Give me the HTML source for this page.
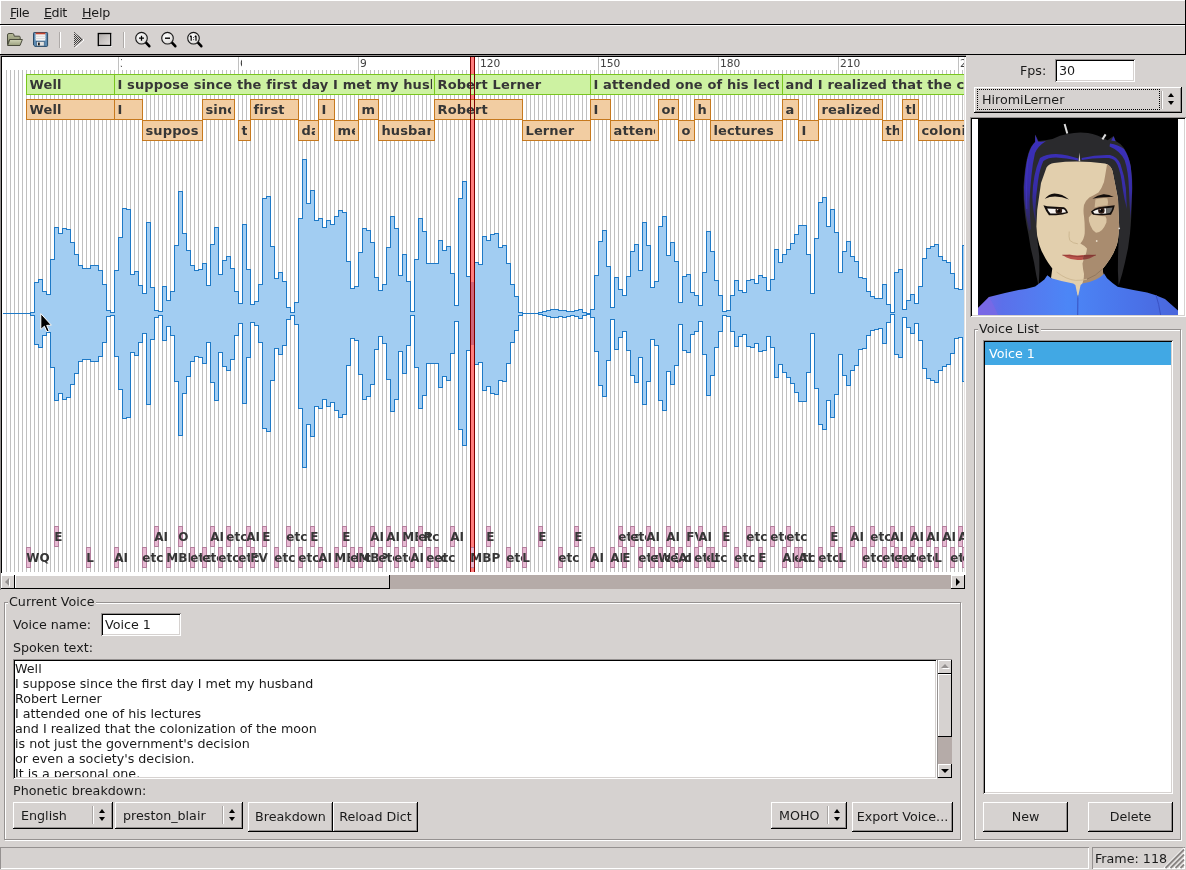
<!DOCTYPE html>
<html lang="en">
<head>
<meta charset="utf-8">
<title>Papagayo</title>
<style>
html,body{margin:0;padding:0}
body{width:1186px;height:870px;position:relative;overflow:hidden;background:#d6d2d0;
 font-family:"DejaVu Sans","Liberation Sans",sans-serif;font-size:12.7px;color:#1a1a1a;line-height:14px}
.a{position:absolute}
.t{position:absolute;white-space:nowrap;line-height:14px;height:14px;margin-top:1px}
.raised{position:absolute;box-sizing:border-box;box-shadow:inset -1px -1px 0 #000,inset 1px 1px 0 #fff}
.btn{position:absolute;box-sizing:border-box;background:#d6d2d0;
 box-shadow:inset -1px -1px 0 #000,inset 1px 1px 0 #fff,inset -2px -2px 0 #959190;text-align:center;white-space:nowrap}
.btn span{position:absolute;left:0;right:0;text-align:center;line-height:14px}
.sunk{position:absolute;box-sizing:border-box;background:#fff;
 box-shadow:inset 1px 1px 0 #959190,inset -1px -1px 0 #fff,inset 2px 2px 0 #000,inset -2px -2px 0 #d6d2d0}
.frame{position:absolute;box-sizing:border-box;border:1px solid #959190;box-shadow:inset 1px 1px 0 #fff,1px 1px 0 #fff}
.flabel{margin-top:1px;position:absolute;background:#d6d2d0;white-space:nowrap;line-height:14px;height:14px;padding:0 2px 0 1px}
u{text-decoration:underline;text-underline-offset:1px}
.cvwrap{position:absolute;left:2px;top:57px;width:962px;height:515px;overflow:hidden;background:#fff}
.cv{position:absolute;left:0;top:0}
.bx{position:absolute;height:19px;overflow:hidden;white-space:nowrap;font-weight:bold;color:#363636;line-height:19px;
 box-sizing:border-box;padding-left:2.5px;font-size:13px;letter-spacing:.12px}
.pt{position:absolute;height:19px;white-space:nowrap;font-weight:bold;color:#363636;line-height:19px;font-size:12px}
.pb{position:absolute;width:5px;height:21px;box-sizing:border-box;border:1px solid #b4809e;background:#e7b9d2}
.rl{position:absolute;top:1px;height:12px;line-height:12px;font-size:10.67px;color:#404040;overflow:hidden;white-space:nowrap}
.arr{position:absolute;width:0;height:0;border-left:3.5px solid transparent;border-right:3.5px solid transparent}
.combo-sep{position:absolute;width:1px;background:#aaa6a4;box-shadow:1px 0 0 #fff}
</style>
</head>
<body>
<div id="root" style="position:absolute;left:0;top:0;width:1186px;height:870px;will-change:transform">
<!-- menubar -->
<div class="raised" style="left:0;top:0;width:1186px;height:25px"></div>
<div class="t" style="left:10px;top:5px;letter-spacing:-.55px"><u>F</u>ile</div>
<div class="t" style="left:44px;top:5px;letter-spacing:-.45px"><u>E</u>dit</div>
<div class="t" style="left:82px;top:5px;letter-spacing:-.2px"><u>H</u>elp</div>
<!-- toolbar -->
<div class="raised" style="left:0;top:25px;width:1186px;height:30px"></div>
<svg class="a" style="left:0;top:25px" width="220" height="30" viewBox="0 25 220 30">
<defs>
<linearGradient id="fg1" x1="0" y1="0" x2="0" y2="1"><stop offset="0" stop-color="#d2d5b8"/><stop offset="1" stop-color="#9a9f7e"/></linearGradient>
<linearGradient id="fg2" x1="0" y1="0" x2="0" y2="1"><stop offset="0" stop-color="#b4b896"/><stop offset="1" stop-color="#8a8e70"/></linearGradient>
<linearGradient id="sg" x1="0" y1="0" x2="1" y2="1"><stop offset="0" stop-color="#aeaaa8"/><stop offset="1" stop-color="#e4e0de"/></linearGradient>
<radialGradient id="lens" cx=".4" cy=".35" r=".7"><stop offset="0" stop-color="#fff"/><stop offset="1" stop-color="#d8d6d4"/></radialGradient>
<pattern id="stip" x="0" y="0" width="2" height="2" patternUnits="userSpaceOnUse"><rect x="0" y="0" width="1" height="1" fill="#000"/><rect x="1" y="1" width="1" height="1" fill="#000"/></pattern>
</defs>
<!-- folder -->
<path d="M7.5 44.5 L7.5 35 Q7.5 33.5 9 33.5 L12.5 33.5 Q13.8 33.5 14 35 L14.2 36.2 L19.2 36.2 Q20.2 36.2 20.2 37.3 L20.2 39.5 L9.5 39.5 Z" fill="url(#fg2)" stroke="#4a4b3c" stroke-width="1" stroke-linejoin="round"/>
<path d="M9.8 39.5 L22.4 39.5 L20 45.5 L7.6 45.5 Z" fill="url(#fg1)" stroke="#4a4b3c" stroke-width="1" stroke-linejoin="round"/>
<!-- floppy -->
<path d="M34.3 32.5 L46.8 32.5 Q47.6 32.5 47.6 33.3 L47.6 45.6 Q47.6 46.4 46.8 46.4 L35 46.4 L33.5 45 L33.5 33.3 Q33.5 32.5 34.3 32.5 Z" fill="#5b8ab2" stroke="#2b4a66" stroke-width="1"/>
<rect x="35.6" y="33" width="9.8" height="7.6" fill="#f4f4f4"/>
<rect x="35.6" y="32.6" width="9.8" height="1.7" fill="#c4452f"/>
<rect x="35.6" y="35.8" width="9.8" height="1" fill="#dcdcdc"/>
<rect x="35.6" y="38" width="9.8" height="1" fill="#dcdcdc"/>
<rect x="36.6" y="41.6" width="7.6" height="4.4" fill="#e2e2e0" stroke="#3a5a78" stroke-width=".6"/>
<rect x="38" y="42.6" width="1.8" height="2.8" fill="#222"/>
<!-- separators -->
<rect x="59" y="32" width="1" height="16" fill="#aeaaa8"/><rect x="60" y="32" width="1" height="16" fill="#fff"/>
<rect x="123" y="32" width="1" height="16" fill="#aeaaa8"/><rect x="124" y="32" width="1" height="16" fill="#fff"/>
<!-- play (insensitive, stippled) -->
<path d="M75.5 33 L84 40 L75.5 47.5" fill="none" stroke="#fff" stroke-width="1"/>
<path d="M74 32 L83 39.5 L74 47 Z" fill="url(#stip)" shape-rendering="crispEdges" opacity=".72"/>
<path d="M74.5 32.5 L83 39.5 L74.5 46.5" fill="none" stroke="#8a8684" stroke-width="1"/>
<!-- stop -->
<rect x="99" y="34" width="13" height="13" fill="#fff"/>
<rect x="98.3" y="33.5" width="12.4" height="12" fill="url(#sg)" stroke="#000" stroke-width="1.3"/>
<!-- zoom icons -->
<g stroke="#000" stroke-linecap="round" fill="none">
 <g id="mag"><line x1="146" y1="42.6" x2="149.3" y2="46.2" stroke-width="2.6"/><circle cx="141.5" cy="38.2" r="5.8" fill="url(#lens)" stroke="#1a1a1a" stroke-width="1.1"/></g>
 <use href="#mag" x="26"/><use href="#mag" x="52"/>
 <path d="M139 38.2 H144 M141.5 35.7 V40.7" stroke-width="1.3" stroke-linecap="butt"/>
 <path d="M165 38.2 H170" stroke-width="1.4" stroke-linecap="butt"/>
 <path d="M191.2 35.8 V40.8 M190 36.8 L191.2 35.8 M196 35.8 V40.8 M194.8 36.8 L196 35.8" stroke-width="1.2" stroke-linecap="butt"/>
 <path d="M193.6 37.2 V37.9 M193.6 39.4 V40.1" stroke-width="1" stroke-linecap="butt"/>
</g>
</svg>

<!-- canvas -->
<div class="a" style="left:0;top:55px;width:966px;height:1px;background:#959190"></div>
<div class="a" style="left:0;top:55px;width:1px;height:535px;background:#959190"></div>
<div class="a" style="left:1px;top:56px;width:965px;height:517px;background:#000"></div>
<div class="a" style="left:1px;top:573px;width:965px;height:2px;background:#fff"></div><div class="a" style="left:2px;top:57px;width:964px;height:518px;background:#fff"></div>
<div class="a" style="left:964px;top:57px;width:1px;height:515px;background:#e6e3e2"></div>
<div class="cvwrap">
<svg class="cv" width="962" height="515" viewBox="0 0 962 515" shape-rendering="crispEdges">
<defs><pattern id="fl" x="0" y="0" width="4" height="8" patternUnits="userSpaceOnUse"><rect x="0" y="0" width="1" height="8" fill="#c0c0c0"/></pattern>
</defs>
<rect x="0" y="0" width="962" height="515" fill="#fff"/>
<rect x="4" y="13" width="958" height="502" fill="url(#fl)"/>
<rect x="116" y="0" width="1" height="13" fill="#c0c0c0"/>
<rect x="236" y="0" width="1" height="13" fill="#c0c0c0"/>
<rect x="356" y="0" width="1" height="13" fill="#c0c0c0"/>
<rect x="476" y="0" width="1" height="13" fill="#c0c0c0"/>
<rect x="596" y="0" width="1" height="13" fill="#c0c0c0"/>
<rect x="716" y="0" width="1" height="13" fill="#c0c0c0"/>
<rect x="836" y="0" width="1" height="13" fill="#c0c0c0"/>
<rect x="956" y="0" width="1" height="13" fill="#c0c0c0"/>
<rect x="469" y="0" width="3" height="515" fill="#ff7f7f"/>
<path d="M0.5 256.5 L4.5 256.5 L4.5 256.5 L8.5 256.5 L8.5 256.5 L12.5 256.5 L12.5 256.5 L16.5 256.5 L16.5 256.5 L20.5 256.5 L20.5 256.5 L24.5 256.5 L24.5 256.5 L28.5 256.5 L28.5 255.5 L32.5 255.5 L32.5 225.5 L36.5 225.5 L36.5 222.5 L40.5 222.5 L40.5 234.5 L44.5 234.5 L44.5 237.5 L48.5 237.5 L48.5 202.5 L52.5 202.5 L52.5 170.5 L56.5 170.5 L56.5 176.5 L60.5 176.5 L60.5 171.5 L64.5 171.5 L64.5 172.5 L68.5 172.5 L68.5 185.5 L72.5 185.5 L72.5 197.5 L76.5 197.5 L76.5 208.5 L80.5 208.5 L80.5 211.5 L84.5 211.5 L84.5 211.5 L88.5 211.5 L88.5 208.5 L92.5 208.5 L92.5 208.5 L96.5 208.5 L96.5 213.5 L100.5 213.5 L100.5 227.5 L104.5 227.5 L104.5 253.5 L108.5 253.5 L108.5 255.5 L112.5 255.5 L112.5 213.5 L116.5 213.5 L116.5 180.5 L120.5 180.5 L120.5 151.5 L124.5 151.5 L124.5 152.5 L128.5 152.5 L128.5 217.5 L132.5 217.5 L132.5 214.5 L136.5 214.5 L136.5 228.5 L140.5 228.5 L140.5 236.5 L144.5 236.5 L144.5 165.5 L148.5 165.5 L148.5 230.5 L152.5 230.5 L152.5 253.5 L156.5 253.5 L156.5 254.5 L160.5 254.5 L160.5 229.5 L164.5 229.5 L164.5 243.5 L168.5 243.5 L168.5 234.5 L172.5 234.5 L172.5 188.5 L176.5 188.5 L176.5 134.5 L180.5 134.5 L180.5 176.5 L184.5 176.5 L184.5 193.5 L188.5 193.5 L188.5 208.5 L192.5 208.5 L192.5 213.5 L196.5 213.5 L196.5 212.5 L200.5 212.5 L200.5 206.5 L204.5 206.5 L204.5 228.5 L208.5 228.5 L208.5 187.5 L212.5 187.5 L212.5 170.5 L216.5 170.5 L216.5 217.5 L220.5 217.5 L220.5 203.5 L224.5 203.5 L224.5 199.5 L228.5 199.5 L228.5 211.5 L232.5 211.5 L232.5 234.5 L236.5 234.5 L236.5 246.5 L240.5 246.5 L240.5 167.5 L244.5 167.5 L244.5 212.5 L248.5 212.5 L248.5 247.5 L252.5 247.5 L252.5 244.5 L256.5 244.5 L256.5 227.5 L260.5 227.5 L260.5 141.5 L264.5 141.5 L264.5 139.5 L268.5 139.5 L268.5 189.5 L272.5 189.5 L272.5 221.5 L276.5 221.5 L276.5 215.5 L280.5 215.5 L280.5 224.5 L284.5 224.5 L284.5 250.5 L288.5 250.5 L288.5 255.5 L292.5 255.5 L292.5 245.5 L296.5 245.5 L296.5 161.5 L300.5 161.5 L300.5 102.5 L304.5 102.5 L304.5 146.5 L308.5 146.5 L308.5 133.5 L312.5 133.5 L312.5 163.5 L316.5 163.5 L316.5 161.5 L320.5 161.5 L320.5 170.5 L324.5 170.5 L324.5 163.5 L328.5 163.5 L328.5 167.5 L332.5 167.5 L332.5 159.5 L336.5 159.5 L336.5 153.5 L340.5 153.5 L340.5 155.5 L344.5 155.5 L344.5 204.5 L348.5 204.5 L348.5 231.5 L352.5 231.5 L352.5 229.5 L356.5 229.5 L356.5 195.5 L360.5 195.5 L360.5 171.5 L364.5 171.5 L364.5 173.5 L368.5 173.5 L368.5 185.5 L372.5 185.5 L372.5 220.5 L376.5 220.5 L376.5 233.5 L380.5 233.5 L380.5 227.5 L384.5 227.5 L384.5 190.5 L388.5 190.5 L388.5 159.5 L392.5 159.5 L392.5 171.5 L396.5 171.5 L396.5 218.5 L400.5 218.5 L400.5 197.5 L404.5 197.5 L404.5 224.5 L408.5 224.5 L408.5 254.5 L412.5 254.5 L412.5 202.5 L416.5 202.5 L416.5 161.5 L420.5 161.5 L420.5 174.5 L424.5 174.5 L424.5 206.5 L428.5 206.5 L428.5 206.5 L432.5 206.5 L432.5 206.5 L436.5 206.5 L436.5 183.5 L440.5 183.5 L440.5 193.5 L444.5 193.5 L444.5 189.5 L448.5 189.5 L448.5 216.5 L452.5 216.5 L452.5 248.5 L456.5 248.5 L456.5 141.5 L460.5 141.5 L460.5 124.5 L464.5 124.5 L464.5 219.5 L468.5 219.5 L468.5 225.5 L472.5 225.5 L472.5 205.5 L476.5 205.5 L476.5 207.5 L480.5 207.5 L480.5 179.5 L484.5 179.5 L484.5 183.5 L488.5 183.5 L488.5 177.5 L492.5 177.5 L492.5 176.5 L496.5 176.5 L496.5 190.5 L500.5 190.5 L500.5 188.5 L504.5 188.5 L504.5 206.5 L508.5 206.5 L508.5 227.5 L512.5 227.5 L512.5 239.5 L516.5 239.5 L516.5 255.5 L520.5 255.5 L520.5 256.5 L524.5 256.5 L524.5 256.5 L528.5 256.5 L528.5 256.5 L532.5 256.5 L532.5 256.5 L536.5 256.5 L536.5 255.5 L540.5 255.5 L540.5 254.5 L544.5 254.5 L544.5 253.5 L548.5 253.5 L548.5 252.5 L552.5 252.5 L552.5 252.5 L556.5 252.5 L556.5 253.5 L560.5 253.5 L560.5 253.5 L564.5 253.5 L564.5 254.5 L568.5 254.5 L568.5 254.5 L572.5 254.5 L572.5 253.5 L576.5 253.5 L576.5 252.5 L580.5 252.5 L580.5 255.5 L584.5 255.5 L584.5 256.5 L588.5 256.5 L588.5 252.5 L592.5 252.5 L592.5 218.5 L596.5 218.5 L596.5 184.5 L600.5 184.5 L600.5 173.5 L604.5 173.5 L604.5 209.5 L608.5 209.5 L608.5 250.5 L612.5 250.5 L612.5 220.5 L616.5 220.5 L616.5 232.5 L620.5 232.5 L620.5 238.5 L624.5 238.5 L624.5 219.5 L628.5 219.5 L628.5 194.5 L632.5 194.5 L632.5 187.5 L636.5 187.5 L636.5 213.5 L640.5 213.5 L640.5 165.5 L644.5 165.5 L644.5 188.5 L648.5 188.5 L648.5 230.5 L652.5 230.5 L652.5 224.5 L656.5 224.5 L656.5 169.5 L660.5 169.5 L660.5 159.5 L664.5 159.5 L664.5 198.5 L668.5 198.5 L668.5 185.5 L672.5 185.5 L672.5 204.5 L676.5 204.5 L676.5 245.5 L680.5 245.5 L680.5 219.5 L684.5 219.5 L684.5 217.5 L688.5 217.5 L688.5 235.5 L692.5 235.5 L692.5 238.5 L696.5 238.5 L696.5 248.5 L700.5 248.5 L700.5 215.5 L704.5 215.5 L704.5 174.5 L708.5 174.5 L708.5 194.5 L712.5 194.5 L712.5 223.5 L716.5 223.5 L716.5 238.5 L720.5 238.5 L720.5 254.5 L724.5 254.5 L724.5 253.5 L728.5 253.5 L728.5 238.5 L732.5 238.5 L732.5 223.5 L736.5 223.5 L736.5 233.5 L740.5 233.5 L740.5 235.5 L744.5 235.5 L744.5 223.5 L748.5 223.5 L748.5 222.5 L752.5 222.5 L752.5 226.5 L756.5 226.5 L756.5 218.5 L760.5 218.5 L760.5 220.5 L764.5 220.5 L764.5 233.5 L768.5 233.5 L768.5 222.5 L772.5 222.5 L772.5 192.5 L776.5 192.5 L776.5 205.5 L780.5 205.5 L780.5 197.5 L784.5 197.5 L784.5 192.5 L788.5 192.5 L788.5 186.5 L792.5 186.5 L792.5 177.5 L796.5 177.5 L796.5 168.5 L800.5 168.5 L800.5 168.5 L804.5 168.5 L804.5 197.5 L808.5 197.5 L808.5 236.5 L812.5 236.5 L812.5 181.5 L816.5 181.5 L816.5 145.5 L820.5 145.5 L820.5 140.5 L824.5 140.5 L824.5 169.5 L828.5 169.5 L828.5 152.5 L832.5 152.5 L832.5 175.5 L836.5 175.5 L836.5 215.5 L840.5 215.5 L840.5 194.5 L844.5 194.5 L844.5 184.5 L848.5 184.5 L848.5 199.5 L852.5 199.5 L852.5 204.5 L856.5 204.5 L856.5 220.5 L860.5 220.5 L860.5 221.5 L864.5 221.5 L864.5 234.5 L868.5 234.5 L868.5 239.5 L872.5 239.5 L872.5 241.5 L876.5 241.5 L876.5 241.5 L880.5 241.5 L880.5 227.5 L884.5 227.5 L884.5 247.5 L888.5 247.5 L888.5 255.5 L892.5 255.5 L892.5 215.5 L896.5 215.5 L896.5 212.5 L900.5 212.5 L900.5 252.5 L904.5 252.5 L904.5 243.5 L908.5 243.5 L908.5 237.5 L912.5 237.5 L912.5 246.5 L916.5 246.5 L916.5 229.5 L920.5 229.5 L920.5 201.5 L924.5 201.5 L924.5 191.5 L928.5 191.5 L928.5 189.5 L932.5 189.5 L932.5 187.5 L936.5 187.5 L936.5 199.5 L940.5 199.5 L940.5 203.5 L944.5 203.5 L944.5 205.5 L948.5 205.5 L948.5 216.5 L952.5 216.5 L952.5 231.5 L956.5 231.5 L956.5 232.5 L960.5 232.5 L960.5 188.5 L964.5 188.5 L964.5 324.5 L960.5 324.5 L960.5 280.5 L956.5 280.5 L956.5 281.5 L952.5 281.5 L952.5 296.5 L948.5 296.5 L948.5 307.5 L944.5 307.5 L944.5 309.5 L940.5 309.5 L940.5 313.5 L936.5 313.5 L936.5 325.5 L932.5 325.5 L932.5 323.5 L928.5 323.5 L928.5 321.5 L924.5 321.5 L924.5 311.5 L920.5 311.5 L920.5 283.5 L916.5 283.5 L916.5 266.5 L912.5 266.5 L912.5 276.5 L908.5 276.5 L908.5 270.5 L904.5 270.5 L904.5 260.5 L900.5 260.5 L900.5 300.5 L896.5 300.5 L896.5 297.5 L892.5 297.5 L892.5 257.5 L888.5 257.5 L888.5 265.5 L884.5 265.5 L884.5 286.5 L880.5 286.5 L880.5 271.5 L876.5 271.5 L876.5 272.5 L872.5 272.5 L872.5 273.5 L868.5 273.5 L868.5 278.5 L864.5 278.5 L864.5 291.5 L860.5 291.5 L860.5 292.5 L856.5 292.5 L856.5 308.5 L852.5 308.5 L852.5 313.5 L848.5 313.5 L848.5 328.5 L844.5 328.5 L844.5 318.5 L840.5 318.5 L840.5 297.5 L836.5 297.5 L836.5 337.5 L832.5 337.5 L832.5 360.5 L828.5 360.5 L828.5 343.5 L824.5 343.5 L824.5 372.5 L820.5 372.5 L820.5 367.5 L816.5 367.5 L816.5 331.5 L812.5 331.5 L812.5 276.5 L808.5 276.5 L808.5 315.5 L804.5 315.5 L804.5 344.5 L800.5 344.5 L800.5 344.5 L796.5 344.5 L796.5 335.5 L792.5 335.5 L792.5 326.5 L788.5 326.5 L788.5 320.5 L784.5 320.5 L784.5 315.5 L780.5 315.5 L780.5 307.5 L776.5 307.5 L776.5 320.5 L772.5 320.5 L772.5 290.5 L768.5 290.5 L768.5 279.5 L764.5 279.5 L764.5 293.5 L760.5 293.5 L760.5 294.5 L756.5 294.5 L756.5 286.5 L752.5 286.5 L752.5 290.5 L748.5 290.5 L748.5 289.5 L744.5 289.5 L744.5 277.5 L740.5 277.5 L740.5 279.5 L736.5 279.5 L736.5 289.5 L732.5 289.5 L732.5 274.5 L728.5 274.5 L728.5 259.5 L724.5 259.5 L724.5 258.5 L720.5 258.5 L720.5 274.5 L716.5 274.5 L716.5 290.5 L712.5 290.5 L712.5 318.5 L708.5 318.5 L708.5 338.5 L704.5 338.5 L704.5 297.5 L700.5 297.5 L700.5 264.5 L696.5 264.5 L696.5 274.5 L692.5 274.5 L692.5 277.5 L688.5 277.5 L688.5 295.5 L684.5 295.5 L684.5 293.5 L680.5 293.5 L680.5 267.5 L676.5 267.5 L676.5 308.5 L672.5 308.5 L672.5 327.5 L668.5 327.5 L668.5 314.5 L664.5 314.5 L664.5 353.5 L660.5 353.5 L660.5 343.5 L656.5 343.5 L656.5 288.5 L652.5 288.5 L652.5 282.5 L648.5 282.5 L648.5 324.5 L644.5 324.5 L644.5 347.5 L640.5 347.5 L640.5 300.5 L636.5 300.5 L636.5 325.5 L632.5 325.5 L632.5 318.5 L628.5 318.5 L628.5 293.5 L624.5 293.5 L624.5 274.5 L620.5 274.5 L620.5 280.5 L616.5 280.5 L616.5 292.5 L612.5 292.5 L612.5 262.5 L608.5 262.5 L608.5 303.5 L604.5 303.5 L604.5 339.5 L600.5 339.5 L600.5 328.5 L596.5 328.5 L596.5 294.5 L592.5 294.5 L592.5 260.5 L588.5 260.5 L588.5 257.5 L584.5 257.5 L584.5 258.5 L580.5 258.5 L580.5 261.5 L576.5 261.5 L576.5 259.5 L572.5 259.5 L572.5 258.5 L568.5 258.5 L568.5 259.5 L564.5 259.5 L564.5 260.5 L560.5 260.5 L560.5 259.5 L556.5 259.5 L556.5 260.5 L552.5 260.5 L552.5 260.5 L548.5 260.5 L548.5 259.5 L544.5 259.5 L544.5 258.5 L540.5 258.5 L540.5 257.5 L536.5 257.5 L536.5 256.5 L532.5 256.5 L532.5 256.5 L528.5 256.5 L528.5 256.5 L524.5 256.5 L524.5 256.5 L520.5 256.5 L520.5 258.5 L516.5 258.5 L516.5 273.5 L512.5 273.5 L512.5 285.5 L508.5 285.5 L508.5 306.5 L504.5 306.5 L504.5 324.5 L500.5 324.5 L500.5 323.5 L496.5 323.5 L496.5 337.5 L492.5 337.5 L492.5 336.5 L488.5 336.5 L488.5 329.5 L484.5 329.5 L484.5 333.5 L480.5 333.5 L480.5 305.5 L476.5 305.5 L476.5 307.5 L472.5 307.5 L472.5 287.5 L468.5 287.5 L468.5 293.5 L464.5 293.5 L464.5 388.5 L460.5 388.5 L460.5 372.5 L456.5 372.5 L456.5 264.5 L452.5 264.5 L452.5 296.5 L448.5 296.5 L448.5 323.5 L444.5 323.5 L444.5 319.5 L440.5 319.5 L440.5 330.5 L436.5 330.5 L436.5 306.5 L432.5 306.5 L432.5 306.5 L428.5 306.5 L428.5 306.5 L424.5 306.5 L424.5 338.5 L420.5 338.5 L420.5 351.5 L416.5 351.5 L416.5 310.5 L412.5 310.5 L412.5 258.5 L408.5 258.5 L408.5 288.5 L404.5 288.5 L404.5 316.5 L400.5 316.5 L400.5 294.5 L396.5 294.5 L396.5 342.5 L392.5 342.5 L392.5 354.5 L388.5 354.5 L388.5 322.5 L384.5 322.5 L384.5 286.5 L380.5 286.5 L380.5 279.5 L376.5 279.5 L376.5 292.5 L372.5 292.5 L372.5 327.5 L368.5 327.5 L368.5 339.5 L364.5 339.5 L364.5 342.5 L360.5 342.5 L360.5 317.5 L356.5 317.5 L356.5 283.5 L352.5 283.5 L352.5 281.5 L348.5 281.5 L348.5 308.5 L344.5 308.5 L344.5 357.5 L340.5 357.5 L340.5 360.5 L336.5 360.5 L336.5 353.5 L332.5 353.5 L332.5 345.5 L328.5 345.5 L328.5 349.5 L324.5 349.5 L324.5 342.5 L320.5 342.5 L320.5 351.5 L316.5 351.5 L316.5 349.5 L312.5 349.5 L312.5 379.5 L308.5 379.5 L308.5 367.5 L304.5 367.5 L304.5 410.5 L300.5 410.5 L300.5 351.5 L296.5 351.5 L296.5 267.5 L292.5 267.5 L292.5 258.5 L288.5 258.5 L288.5 262.5 L284.5 262.5 L284.5 288.5 L280.5 288.5 L280.5 297.5 L276.5 297.5 L276.5 291.5 L272.5 291.5 L272.5 323.5 L268.5 323.5 L268.5 374.5 L264.5 374.5 L264.5 371.5 L260.5 371.5 L260.5 285.5 L256.5 285.5 L256.5 268.5 L252.5 268.5 L252.5 265.5 L248.5 265.5 L248.5 300.5 L244.5 300.5 L244.5 346.5 L240.5 346.5 L240.5 266.5 L236.5 266.5 L236.5 278.5 L232.5 278.5 L232.5 302.5 L228.5 302.5 L228.5 313.5 L224.5 313.5 L224.5 309.5 L220.5 309.5 L220.5 295.5 L216.5 295.5 L216.5 343.5 L212.5 343.5 L212.5 325.5 L208.5 325.5 L208.5 285.5 L204.5 285.5 L204.5 306.5 L200.5 306.5 L200.5 300.5 L196.5 300.5 L196.5 299.5 L192.5 299.5 L192.5 304.5 L188.5 304.5 L188.5 319.5 L184.5 319.5 L184.5 336.5 L180.5 336.5 L180.5 378.5 L176.5 378.5 L176.5 324.5 L172.5 324.5 L172.5 278.5 L168.5 278.5 L168.5 269.5 L164.5 269.5 L164.5 283.5 L160.5 283.5 L160.5 258.5 L156.5 258.5 L156.5 260.5 L152.5 260.5 L152.5 282.5 L148.5 282.5 L148.5 347.5 L144.5 347.5 L144.5 276.5 L140.5 276.5 L140.5 285.5 L136.5 285.5 L136.5 298.5 L132.5 298.5 L132.5 295.5 L128.5 295.5 L128.5 360.5 L124.5 360.5 L124.5 361.5 L120.5 361.5 L120.5 332.5 L116.5 332.5 L116.5 299.5 L112.5 299.5 L112.5 258.5 L108.5 258.5 L108.5 259.5 L104.5 259.5 L104.5 285.5 L100.5 285.5 L100.5 299.5 L96.5 299.5 L96.5 304.5 L92.5 304.5 L92.5 304.5 L88.5 304.5 L88.5 302.5 L84.5 302.5 L84.5 302.5 L80.5 302.5 L80.5 304.5 L76.5 304.5 L76.5 316.5 L72.5 316.5 L72.5 327.5 L68.5 327.5 L68.5 340.5 L64.5 340.5 L64.5 342.5 L60.5 342.5 L60.5 336.5 L56.5 336.5 L56.5 343.5 L52.5 343.5 L52.5 310.5 L48.5 310.5 L48.5 275.5 L44.5 275.5 L44.5 278.5 L40.5 278.5 L40.5 290.5 L36.5 290.5 L36.5 287.5 L32.5 287.5 L32.5 258.5 L28.5 258.5 L28.5 256.5 L24.5 256.5 L24.5 256.5 L20.5 256.5 L20.5 256.5 L16.5 256.5 L16.5 256.5 L12.5 256.5 L12.5 256.5 L8.5 256.5 L8.5 256.5 L4.5 256.5 L4.5 256.5 L0.5 256.5 Z" fill="#a2cdf2" stroke="#1e79c6" stroke-width="1" stroke-linejoin="miter"/>
<rect x="469" y="225" width="3" height="63" fill="#d16679"/>
<rect x="24.5" y="17.5" width="88" height="20" fill="#cdf2a2" stroke="#79c61e"/>
<rect x="112.5" y="17.5" width="320" height="20" fill="#cdf2a2" stroke="#79c61e"/>
<rect x="432.5" y="17.5" width="156" height="20" fill="#cdf2a2" stroke="#79c61e"/>
<rect x="588.5" y="17.5" width="192" height="20" fill="#cdf2a2" stroke="#79c61e"/>
<rect x="780.5" y="17.5" width="192" height="20" fill="#cdf2a2" stroke="#79c61e"/>
<rect x="24.5" y="42.5" width="88" height="20" fill="#f2cda2" stroke="#c6791e"/>
<rect x="112.5" y="42.5" width="28" height="20" fill="#f2cda2" stroke="#c6791e"/>
<rect x="140.5" y="63.5" width="60" height="20" fill="#f2cda2" stroke="#c6791e"/>
<rect x="200.5" y="42.5" width="32" height="20" fill="#f2cda2" stroke="#c6791e"/>
<rect x="236.5" y="63.5" width="12" height="20" fill="#f2cda2" stroke="#c6791e"/>
<rect x="248.5" y="42.5" width="48" height="20" fill="#f2cda2" stroke="#c6791e"/>
<rect x="296.5" y="63.5" width="20" height="20" fill="#f2cda2" stroke="#c6791e"/>
<rect x="316.5" y="42.5" width="16" height="20" fill="#f2cda2" stroke="#c6791e"/>
<rect x="332.5" y="63.5" width="24" height="20" fill="#f2cda2" stroke="#c6791e"/>
<rect x="356.5" y="42.5" width="20" height="20" fill="#f2cda2" stroke="#c6791e"/>
<rect x="376.5" y="63.5" width="56" height="20" fill="#f2cda2" stroke="#c6791e"/>
<rect x="432.5" y="42.5" width="88" height="20" fill="#f2cda2" stroke="#c6791e"/>
<rect x="520.5" y="63.5" width="68" height="20" fill="#f2cda2" stroke="#c6791e"/>
<rect x="588.5" y="42.5" width="20" height="20" fill="#f2cda2" stroke="#c6791e"/>
<rect x="608.5" y="63.5" width="48" height="20" fill="#f2cda2" stroke="#c6791e"/>
<rect x="656.5" y="42.5" width="20" height="20" fill="#f2cda2" stroke="#c6791e"/>
<rect x="676.5" y="63.5" width="16" height="20" fill="#f2cda2" stroke="#c6791e"/>
<rect x="692.5" y="42.5" width="16" height="20" fill="#f2cda2" stroke="#c6791e"/>
<rect x="708.5" y="63.5" width="72" height="20" fill="#f2cda2" stroke="#c6791e"/>
<rect x="780.5" y="42.5" width="16" height="20" fill="#f2cda2" stroke="#c6791e"/>
<rect x="796.5" y="63.5" width="20" height="20" fill="#f2cda2" stroke="#c6791e"/>
<rect x="816.5" y="42.5" width="64" height="20" fill="#f2cda2" stroke="#c6791e"/>
<rect x="880.5" y="63.5" width="20" height="20" fill="#f2cda2" stroke="#c6791e"/>
<rect x="900.5" y="42.5" width="16" height="20" fill="#f2cda2" stroke="#c6791e"/>
<rect x="916.5" y="63.5" width="92" height="20" fill="#f2cda2" stroke="#c6791e"/>
<rect x="468" y="0" width="1" height="515" fill="#800000"/><rect x="472" y="0" width="1" height="515" fill="#800000"/>
</svg>
<div class="rl" style="left:118px;width:2px">30</div>
<div class="rl" style="left:238px;width:2px">60</div>
<div class="rl" style="left:358px;width:7px">90</div>
<div class="rl" style="left:478px;width:40px">120</div>
<div class="rl" style="left:598px;width:40px">150</div>
<div class="rl" style="left:718px;width:40px">180</div>
<div class="rl" style="left:838px;width:40px">210</div>
<div class="rl" style="left:958px;width:4px">240</div>
<div class="bx" style="left:25px;top:18px;width:84px">Well</div>
<div class="bx" style="left:113px;top:18px;width:317px">I suppose since the first day I met my husband</div>
<div class="bx" style="left:433px;top:18px;width:152px">Robert Lerner</div>
<div class="bx" style="left:589px;top:18px;width:188px">I attended one of his lectures</div>
<div class="bx" style="left:781px;top:18px;width:181px">and I realized that the colonization of the moon</div>
<div class="bx" style="left:25px;top:43px;width:84px">Well</div>
<div class="bx" style="left:113px;top:43px;width:24px">I</div>
<div class="bx" style="left:141px;top:64px;width:56px">suppose</div>
<div class="bx" style="left:201px;top:43px;width:28px">since</div>
<div class="bx" style="left:237px;top:64px;width:8px">the</div>
<div class="bx" style="left:249px;top:43px;width:44px">first</div>
<div class="bx" style="left:297px;top:64px;width:16px">day</div>
<div class="bx" style="left:317px;top:43px;width:12px">I</div>
<div class="bx" style="left:333px;top:64px;width:20px">met</div>
<div class="bx" style="left:357px;top:43px;width:16px">my</div>
<div class="bx" style="left:377px;top:64px;width:52px">husband</div>
<div class="bx" style="left:433px;top:43px;width:84px">Robert</div>
<div class="bx" style="left:521px;top:64px;width:64px">Lerner</div>
<div class="bx" style="left:589px;top:43px;width:16px">I</div>
<div class="bx" style="left:609px;top:64px;width:44px">attended</div>
<div class="bx" style="left:657px;top:43px;width:16px">one</div>
<div class="bx" style="left:677px;top:64px;width:12px">of</div>
<div class="bx" style="left:693px;top:43px;width:12px">his</div>
<div class="bx" style="left:709px;top:64px;width:68px">lectures</div>
<div class="bx" style="left:781px;top:43px;width:12px">and</div>
<div class="bx" style="left:797px;top:64px;width:16px">I</div>
<div class="bx" style="left:817px;top:43px;width:60px">realized</div>
<div class="bx" style="left:881px;top:64px;width:16px">that</div>
<div class="bx" style="left:901px;top:43px;width:12px">the</div>
<div class="bx" style="left:917px;top:64px;width:45px">colonization</div>
<div class="pb" style="left:24px;top:490px"></div><div class="pt" style="left:24.3px;top:492px">WQ</div>
<div class="pb" style="left:52px;top:469px"></div><div class="pt" style="left:52.3px;top:471px">E</div>
<div class="pb" style="left:84px;top:490px"></div><div class="pt" style="left:84.3px;top:492px">L</div>
<div class="pb" style="left:112px;top:490px"></div><div class="pt" style="left:112.3px;top:492px">AI</div>
<div class="pb" style="left:140px;top:490px"></div><div class="pt" style="left:140.3px;top:492px">etc</div>
<div class="pb" style="left:152px;top:469px"></div><div class="pt" style="left:152.3px;top:471px">AI</div>
<div class="pb" style="left:164px;top:490px"></div><div class="pt" style="left:164.3px;top:492px">MBP</div>
<div class="pb" style="left:176px;top:469px"></div><div class="pt" style="left:176.3px;top:471px">O</div>
<div class="pb" style="left:188px;top:490px"></div><div class="pt" style="left:188.3px;top:492px">etc</div>
<div class="pb" style="left:200px;top:490px"></div><div class="pt" style="left:200.3px;top:492px">etc</div>
<div class="pb" style="left:208px;top:469px"></div><div class="pt" style="left:208.3px;top:471px">AI</div>
<div class="pb" style="left:216px;top:490px"></div><div class="pt" style="left:216.3px;top:492px">etc</div>
<div class="pb" style="left:224px;top:469px"></div><div class="pt" style="left:224.3px;top:471px">etc</div>
<div class="pb" style="left:236px;top:490px"></div><div class="pt" style="left:236.3px;top:492px">etc</div>
<div class="pb" style="left:244px;top:469px"></div><div class="pt" style="left:244.3px;top:471px">AI</div>
<div class="pb" style="left:248px;top:490px"></div><div class="pt" style="left:248.3px;top:492px">FV</div>
<div class="pb" style="left:260px;top:469px"></div><div class="pt" style="left:260.3px;top:471px">E</div>
<div class="pb" style="left:272px;top:490px"></div><div class="pt" style="left:272.3px;top:492px">etc</div>
<div class="pb" style="left:284px;top:469px"></div><div class="pt" style="left:284.3px;top:471px">etc</div>
<div class="pb" style="left:296px;top:490px"></div><div class="pt" style="left:296.3px;top:492px">etc</div>
<div class="pb" style="left:308px;top:469px"></div><div class="pt" style="left:308.3px;top:471px">E</div>
<div class="pb" style="left:316px;top:490px"></div><div class="pt" style="left:316.3px;top:492px">AI</div>
<div class="pb" style="left:332px;top:490px"></div><div class="pt" style="left:332.3px;top:492px">MBP</div>
<div class="pb" style="left:340px;top:469px"></div><div class="pt" style="left:340.3px;top:471px">E</div>
<div class="pb" style="left:348px;top:490px"></div><div class="pt" style="left:348.3px;top:492px">etc</div>
<div class="pb" style="left:356px;top:490px"></div><div class="pt" style="left:356.3px;top:492px">MBP</div>
<div class="pb" style="left:368px;top:469px"></div><div class="pt" style="left:368.3px;top:471px">AI</div>
<div class="pb" style="left:376px;top:490px"></div><div class="pt" style="left:376.3px;top:492px">etc</div>
<div class="pb" style="left:384px;top:469px"></div><div class="pt" style="left:384.3px;top:471px">AI</div>
<div class="pb" style="left:392px;top:490px"></div><div class="pt" style="left:392.3px;top:492px">etc</div>
<div class="pb" style="left:400px;top:469px"></div><div class="pt" style="left:400.3px;top:471px">MBP</div>
<div class="pb" style="left:408px;top:490px"></div><div class="pt" style="left:408.3px;top:492px">AI</div>
<div class="pb" style="left:416px;top:469px"></div><div class="pt" style="left:416.3px;top:471px">etc</div>
<div class="pb" style="left:424px;top:490px"></div><div class="pt" style="left:424.3px;top:492px">etc</div>
<div class="pb" style="left:432px;top:490px"></div><div class="pt" style="left:432.3px;top:492px">etc</div>
<div class="pb" style="left:448px;top:469px"></div><div class="pt" style="left:448.3px;top:471px">AI</div>
<div class="pb" style="left:468px;top:490px"></div><div class="pt" style="left:468.3px;top:492px">MBP</div>
<div class="pb" style="left:484px;top:469px"></div><div class="pt" style="left:484.3px;top:471px">E</div>
<div class="pb" style="left:504px;top:490px"></div><div class="pt" style="left:504.3px;top:492px">etc</div>
<div class="pb" style="left:520px;top:490px"></div><div class="pt" style="left:520.3px;top:492px">L</div>
<div class="pb" style="left:536px;top:469px"></div><div class="pt" style="left:536.3px;top:471px">E</div>
<div class="pb" style="left:556px;top:490px"></div><div class="pt" style="left:556.3px;top:492px">etc</div>
<div class="pb" style="left:572px;top:469px"></div><div class="pt" style="left:572.3px;top:471px">E</div>
<div class="pb" style="left:588px;top:490px"></div><div class="pt" style="left:588.3px;top:492px">AI</div>
<div class="pb" style="left:608px;top:490px"></div><div class="pt" style="left:608.3px;top:492px">AI</div>
<div class="pb" style="left:616px;top:469px"></div><div class="pt" style="left:616.3px;top:471px">etc</div>
<div class="pb" style="left:620px;top:490px"></div><div class="pt" style="left:620.3px;top:492px">E</div>
<div class="pb" style="left:628px;top:469px"></div><div class="pt" style="left:628.3px;top:471px">etc</div>
<div class="pb" style="left:636px;top:490px"></div><div class="pt" style="left:636.3px;top:492px">etc</div>
<div class="pb" style="left:644px;top:469px"></div><div class="pt" style="left:644.3px;top:471px">AI</div>
<div class="pb" style="left:648px;top:490px"></div><div class="pt" style="left:648.3px;top:492px">etc</div>
<div class="pb" style="left:656px;top:490px"></div><div class="pt" style="left:656.3px;top:492px">WQ</div>
<div class="pb" style="left:664px;top:469px"></div><div class="pt" style="left:664.3px;top:471px">AI</div>
<div class="pb" style="left:668px;top:490px"></div><div class="pt" style="left:668.3px;top:492px">etc</div>
<div class="pb" style="left:676px;top:490px"></div><div class="pt" style="left:676.3px;top:492px">AI</div>
<div class="pb" style="left:684px;top:469px"></div><div class="pt" style="left:684.3px;top:471px">FV</div>
<div class="pb" style="left:692px;top:490px"></div><div class="pt" style="left:692.3px;top:492px">etc</div>
<div class="pb" style="left:696px;top:469px"></div><div class="pt" style="left:696.3px;top:471px">AI</div>
<div class="pb" style="left:704px;top:490px"></div><div class="pt" style="left:704.3px;top:492px">etc</div>
<div class="pb" style="left:708px;top:490px"></div><div class="pt" style="left:708.3px;top:492px">L</div>
<div class="pb" style="left:720px;top:469px"></div><div class="pt" style="left:720.3px;top:471px">E</div>
<div class="pb" style="left:732px;top:490px"></div><div class="pt" style="left:732.3px;top:492px">etc</div>
<div class="pb" style="left:744px;top:469px"></div><div class="pt" style="left:744.3px;top:471px">etc</div>
<div class="pb" style="left:756px;top:490px"></div><div class="pt" style="left:756.3px;top:492px">E</div>
<div class="pb" style="left:768px;top:469px"></div><div class="pt" style="left:768.3px;top:471px">etc</div>
<div class="pb" style="left:780px;top:490px"></div><div class="pt" style="left:780.3px;top:492px">AI</div>
<div class="pb" style="left:784px;top:469px"></div><div class="pt" style="left:784.3px;top:471px">etc</div>
<div class="pb" style="left:792px;top:490px"></div><div class="pt" style="left:792.3px;top:492px">etc</div>
<div class="pb" style="left:796px;top:490px"></div><div class="pt" style="left:796.3px;top:492px">AI</div>
<div class="pb" style="left:816px;top:490px"></div><div class="pt" style="left:816.3px;top:492px">etc</div>
<div class="pb" style="left:828px;top:469px"></div><div class="pt" style="left:828.3px;top:471px">E</div>
<div class="pb" style="left:836px;top:490px"></div><div class="pt" style="left:836.3px;top:492px">L</div>
<div class="pb" style="left:848px;top:469px"></div><div class="pt" style="left:848.3px;top:471px">AI</div>
<div class="pb" style="left:860px;top:490px"></div><div class="pt" style="left:860.3px;top:492px">etc</div>
<div class="pb" style="left:868px;top:469px"></div><div class="pt" style="left:868.3px;top:471px">etc</div>
<div class="pb" style="left:880px;top:490px"></div><div class="pt" style="left:880.3px;top:492px">etc</div>
<div class="pb" style="left:888px;top:469px"></div><div class="pt" style="left:888.3px;top:471px">AI</div>
<div class="pb" style="left:892px;top:490px"></div><div class="pt" style="left:892.3px;top:492px">etc</div>
<div class="pb" style="left:900px;top:490px"></div><div class="pt" style="left:900.3px;top:492px">etc</div>
<div class="pb" style="left:908px;top:469px"></div><div class="pt" style="left:908.3px;top:471px">AI</div>
<div class="pb" style="left:916px;top:490px"></div><div class="pt" style="left:916.3px;top:492px">etc</div>
<div class="pb" style="left:924px;top:469px"></div><div class="pt" style="left:924.3px;top:471px">AI</div>
<div class="pb" style="left:932px;top:490px"></div><div class="pt" style="left:932.3px;top:492px">L</div>
<div class="pb" style="left:940px;top:469px"></div><div class="pt" style="left:940.3px;top:471px">AI</div>
<div class="pb" style="left:948px;top:490px"></div><div class="pt" style="left:948.3px;top:492px">etc</div>
<div class="pb" style="left:956px;top:469px"></div><div class="pt" style="left:956.3px;top:471px">AI</div>
<div class="pb" style="left:960px;top:490px"></div><div class="pt" style="left:960.3px;top:492px">etc</div>
<!-- playback cursor -->
<div class="a" style="left:468px;top:0;width:1px;height:516px;background:#800000"></div><div class="a" style="left:472px;top:0;width:1px;height:516px;background:#800000"></div>
</div>
<!-- h scrollbar -->
<div class="a" style="left:1px;top:575px;width:964px;height:14px;background:#b5aba8"></div>
<div class="raised" style="left:1px;top:575px;width:14px;height:14px;background:#d6d2d0"></div>
<div class="raised" style="left:15px;top:575px;width:375px;height:14px;background:#d6d2d0"></div>
<div class="raised" style="left:951px;top:575px;width:14px;height:14px;background:#d6d2d0"></div>
<div class="a" style="left:6px;top:579px;width:0;height:0;border-top:4px solid transparent;border-bottom:4px solid transparent;border-right:4px solid #fff"></div><div class="a" style="left:5px;top:578px;width:0;height:0;border-top:4px solid transparent;border-bottom:4px solid transparent;border-right:4px solid #959190"></div>
<div class="a" style="left:956px;top:578px;width:0;height:0;border-top:4px solid transparent;border-bottom:4px solid transparent;border-left:4px solid #000"></div>

<!-- Current Voice frame -->
<div class="frame" style="left:4px;top:602px;width:957px;height:238px"></div>
<div class="flabel" style="left:8px;top:594px">Current Voice</div>
<div class="t" style="left:13px;top:617px">Voice name:</div>
<div class="sunk" style="left:101px;top:613px;width:80px;height:23px"></div>
<div class="t" style="left:105px;top:617px">Voice 1</div>
<div class="t" style="left:13px;top:640px">Spoken text:</div>
<div class="sunk" style="left:13px;top:659px;width:924px;height:120px"></div>
<div class="a" style="left:15px;top:661px;width:918px;height:116px;overflow:hidden;line-height:15px;white-space:pre">Well
I suppose since the first day I met my husband
Robert Lerner
I attended one of his lectures
and I realized that the colonization of the moon
is not just the government's decision
or even a society's decision.
It is a personal one.</div>
<!-- v scrollbar -->
<div class="a" style="left:937px;top:659px;width:15px;height:119px;background:#959190"></div><div class="a" style="left:938px;top:660px;width:14px;height:118px;background:#b5aba8"></div>
<div class="raised" style="left:938px;top:660px;width:14px;height:14px;background:#d6d2d0"></div>
<div class="raised" style="left:938px;top:674px;width:14px;height:63px;background:#d6d2d0"></div>
<div class="raised" style="left:938px;top:764px;width:14px;height:14px;background:#d6d2d0"></div>
<div class="a" style="left:942px;top:665px;width:0;height:0;border-left:4px solid transparent;border-right:4px solid transparent;border-bottom:4px solid #fff"></div><div class="a" style="left:941px;top:664px;width:0;height:0;border-left:4px solid transparent;border-right:4px solid transparent;border-bottom:4px solid #959190"></div>
<div class="a" style="left:941px;top:769px;width:0;height:0;border-left:4px solid transparent;border-right:4px solid transparent;border-top:4px solid #000"></div>

<div class="t" style="left:13px;top:783px">Phonetic breakdown:</div>
<!-- combos -->
<div class="btn" style="left:13px;top:802px;width:100px;height:27px"></div>
<div class="t" style="left:21px;top:808px">English</div>
<div class="combo-sep" style="left:92px;top:806px;height:18px"></div>
<div class="arr" style="left:99px;top:809px;border-bottom:4px solid #000"></div>
<div class="arr" style="left:99px;top:817px;border-top:4px solid #000"></div>

<div class="btn" style="left:115px;top:802px;width:128px;height:27px"></div>
<div class="t" style="left:123px;top:808px">preston_blair</div>
<div class="combo-sep" style="left:222px;top:806px;height:18px"></div>
<div class="arr" style="left:229px;top:809px;border-bottom:4px solid #000"></div>
<div class="arr" style="left:229px;top:817px;border-top:4px solid #000"></div>

<div class="btn" style="left:248px;top:802px;width:85px;height:30px"><span style="top:8px">Breakdown</span></div>
<div class="btn" style="left:333px;top:802px;width:85px;height:30px"><span style="top:8px">Reload Dict</span></div>

<div class="btn" style="left:771px;top:802px;width:76px;height:27px"></div>
<div class="t" style="left:779px;top:808px">MOHO</div>
<div class="combo-sep" style="left:827px;top:806px;height:18px"></div>
<div class="arr" style="left:834px;top:809px;border-bottom:4px solid #000"></div>
<div class="arr" style="left:834px;top:817px;border-top:4px solid #000"></div>
<div class="btn" style="left:852px;top:802px;width:101px;height:30px"><span style="top:8px">Export Voice...</span></div>

<!-- right panel -->
<div class="t" style="left:1020px;top:63px">Fps:</div>
<div class="sunk" style="left:1055px;top:59px;width:80px;height:23px"></div>
<div class="t" style="left:1059px;top:63px">30</div>
<div class="btn" style="left:974px;top:87px;width:208px;height:26px"></div>
<div class="a" style="left:977px;top:89px;width:183px;height:21px;box-sizing:border-box;border:1px dotted #000"></div>
<div class="t" style="left:982px;top:92px">HiromiLerner</div>
<div class="combo-sep" style="left:1161px;top:91px;height:18px"></div>
<div class="arr" style="left:1168px;top:93px;border-bottom:4px solid #000"></div>
<div class="arr" style="left:1168px;top:101px;border-top:4px solid #000"></div>
<!-- picture -->
<div class="sunk" style="left:970px;top:117px;width:216px;height:200px"></div>
<div class="a" style="left:978px;top:119px;width:200px;height:196px;background:#000;overflow:hidden">
<svg width="200" height="196" viewBox="0 0 200 196" style="position:absolute;left:0;top:0">
<defs>
<linearGradient id="cl" x1="0" y1="0" x2="1" y2="0"><stop offset="0" stop-color="#7a66e6"/><stop offset=".12" stop-color="#5b70ea"/><stop offset=".45" stop-color="#4c86f6"/><stop offset=".75" stop-color="#4a74ea"/><stop offset="1" stop-color="#4a66dc"/></linearGradient>
<linearGradient id="hl" gradientUnits="userSpaceOnUse" x1="0" y1="20" x2="0" y2="112"><stop offset="0" stop-color="#3b30bc"/><stop offset=".55" stop-color="#372ca8"/><stop offset="1" stop-color="#2b2848"/></linearGradient>
<clipPath id="skinclip"><path id="skinp" d="M68.5 48.5 Q71 44.5 76 44 Q100 41 127 44.5 Q133 46 134.5 52 L140 80 L141.2 108 Q140.5 120 138.8 126 Q136 134 132 140 Q128 146 124.5 150 L125.5 156 L129 160 L118 168 L104 166 L100 179 L96 166 L82 168 L73 159 L74.3 149.5 Q70 144 67.5 139.5 Q63 132 61.3 126 Q58.5 117 58.4 108 L59.2 91 L63 64 Z"/></clipPath>
</defs>
<rect width="200" height="196" fill="#000"/>
<!-- hair mass -->
<path d="M57.2 15.5 L60.5 22 Q67 21.5 74.5 20 Q82 16 89.4 15 Q100 12.5 110 14 Q119 15.5 129.6 21.3 L135.6 17 L137.7 22 Q142 24 145.7 28.7 Q150.5 36 152.6 46 Q154.5 58 154.4 69 L153.8 80 Q153.5 100 152 114.5 Q150.5 130 147 143.2 Q144.5 155 140.6 166.5 Q139.5 152 140 137.5 L141 109 L100 70 L58.4 108 Q59.5 124 61.3 137.5 Q61.8 152 60.7 167.5 Q58 156 56 143.2 Q52 128 50.3 114.5 Q46.5 98 45.7 80 Q44.8 68 46.3 57.5 Q47.5 44 50.3 34.5 Q52.5 27 57 23 Z" fill="#2a2a2d"/>
<!-- purple-blue highlights -->
<path d="M57.2 15.8 L60 22.4 Q64 23 68 22 Q60 27 57 34 Q54.6 44 53.4 57 Q52 70 51.6 82 Q51.6 96 53 110 L51 112 Q47.4 96 46.2 80 Q45.6 68 46.8 57.5 Q48 44 50.6 35 Q53 27 57.2 23 Z" fill="url(#hl)"/>
<path d="M50 40 Q48.6 56 48.4 72 L48.8 90" fill="none" stroke="#4338c0" stroke-width="1" opacity=".7"/>
<path d="M62 39 Q68 35 78 35 Q90 35.8 100.4 39.6 L100.2 41.6 Q88 39 78 38.6 Q70 38.6 65.4 42 Q61.6 50 60 62 Q57.6 78 57.4 92 L58 104 Q54.6 92 54.4 78 Q54.6 56 62 39 Z" fill="url(#hl)"/>
<path d="M103.6 39 Q118 35.6 132 36 Q139 37.6 142.4 45 Q146.4 56 147.8 69 L149 90 Q146 80 144.6 69 Q143 54 139.6 46 Q137 39.6 131 39 Q116 38.4 103.8 41 Z" fill="url(#hl)"/>
<path d="M132 24.4 Q140 25.4 146 30 Q151 37.6 152.8 48 Q154.4 60 154 74 L152.6 100 Q151.4 86 151 70 Q150.4 52 146.6 41 Q142 31.6 131.6 27.4 Z" fill="url(#hl)"/>
<path d="M135.6 17.2 L137.6 22.2 L133.2 21.6 Z" fill="#3a30b4"/>
<!-- hair sticks -->
<path d="M86.6 5 L89.3 14.6" stroke="#dcdcdc" stroke-width="2"/>
<path d="M127.6 15.4 L124.4 20.4" stroke="#dcdcdc" stroke-width="2"/>
<!-- skin -->
<use href="#skinp" fill="#e2cfad"/>
<g clip-path="url(#skinclip)">
 <!-- shadow side -->
 <path d="M129.4 43 Q127.5 55 126 63 Q123.5 70 120.5 73.6 Q115 77 111.3 78.4 Q107 82 106 86 Q105 92 106 97.2 Q107 106 106.7 114.5 Q106 120.5 102.4 124.6 Q106 126.5 109 129.4 Q108.6 132.5 107.8 135.2 Q105.6 140 104.5 144.4 Q104.8 150 106 154.7 Q106 158 105.5 160.5 L104 166 L100.6 179 L160 180 L160 40 Z" fill="#a98c6f"/>
 <!-- lighter patches in shadow -->
 <path d="M113.6 95.2 Q120 97.4 127.4 97.2 Q129.4 100 128.4 103.4 Q126.6 108 124 111 Q121 113.8 118 113.8 Q114 111 112.4 106.4 Q110.4 102 110.8 98.4 Z" fill="#dcc7a5"/>
 <path d="M117.4 80.6 Q123 78.2 129.4 79.2 Q130.6 83 129.6 86.6 Q123 86.2 116.6 88.6 Z" fill="#d2bb98"/>
 <!-- chin / neck shading -->
 <path d="M78.6 153 Q88 160.4 97.5 161.4 Q103 161.6 109 160.2" fill="none" stroke="#cdb791" stroke-width=".9"/>
 <path d="M109 160.2 Q118 157 124.5 150" fill="none" stroke="#8f765c" stroke-width=".9"/>
 <!-- nose -->
 <path d="M91.2 112.5 Q90.6 118 91.8 121.4 Q95 124.4 99.8 124.8" fill="none" stroke="#cbb58f" stroke-width=".9"/>
</g>
<!-- part line -->
<path d="M101.4 33.6 L102.3 42.4 L100.6 42.2 Z" fill="#d8d0c8"/>
<!-- eyebrows -->
<path d="M66.8 79.8 Q70.6 75.2 76.4 74.6 Q84.4 74.8 91 80.6 Q84 77.8 77 77.6 Q71.6 77.6 66.8 79.8 Z" fill="#120d0b"/>
<path d="M114.4 79.8 Q119.6 76 125.4 75.2 Q131 75 135.8 78 Q130.6 77.8 125.6 78.2 Q119.6 78.6 114.4 79.8 Z" fill="#120d0b"/>
<!-- left eye -->
<path d="M65.4 86.2 Q69 87.4 73 87.6 L86 88.2 Q89 89.6 90 94 Q85 96 78 96.2 L71 96.2 Q68 92.6 65.4 86.2 Z" fill="#120d0b"/>
<path d="M69.2 89.4 L86 90.2 Q87.8 91.6 88 93.2 Q82 94.6 72.4 94.6 Q70.4 92.4 69.2 89.4 Z" fill="#f6f2ee"/>
<circle cx="80.8" cy="91.7" r="3.3" fill="#2e1c15"/><circle cx="80.8" cy="91.7" r="1.5" fill="#070505"/><circle cx="79.6" cy="90.6" r=".7" fill="#e8e0d8"/>
<!-- right eye -->
<path d="M113 92.6 Q116.4 89 121 88.2 Q128.6 87 136.8 86.2 Q135.8 91.6 133 95.8 Q124 96.6 115.4 95.8 Q113.6 94.6 113 92.6 Z" fill="#120d0b"/>
<path d="M115 92.6 Q117.6 90.6 121.4 90 L128 89.2 L128.4 94.4 Q121 95 116.4 94.4 Z" fill="#f6f2ee"/>
<path d="M128 89.2 L134.6 88.4 Q133.6 91.8 131.8 94 L128.4 94.4 Z" fill="#6b6b69"/>
<circle cx="123.4" cy="91.6" r="3.2" fill="#2e1c15"/><circle cx="123.4" cy="91.6" r="1.5" fill="#070505"/><circle cx="122.2" cy="90.6" r=".7" fill="#e8e0d8"/>
<!-- mouth -->
<path d="M84.3 136.1 Q88 135.6 91.7 135.5 Q96 136.6 99.8 136.4 L105.4 136 L104.8 140.8 Q101 141.2 98 140.8 Q92 140 88.6 138.4 Z" fill="#b9524a"/>
<path d="M105.4 136 Q109 135.4 112.6 135.8 L118 136.1 Q114 138.6 111.3 139.4 Q108 140.4 104.8 140.8 Z" fill="#8e423c"/>
<path d="M84.3 136.1 Q92 136.6 99.8 137.6 Q109 137.2 118 136.1" fill="none" stroke="#7c302c" stroke-width=".6"/>
<!-- dots -->
<circle cx="118.7" cy="122" r=".9" fill="#e8dcc8"/><circle cx="141.2" cy="109.4" r=".9" fill="#d8d4d0"/>
<!-- clothing -->
<path d="M0 189 L11 178 Q26 174 40.5 171 Q50 169.6 57.2 167.4 L66.4 160.5 L69.3 156.2 L73.3 159.3 Q84 162.6 95.2 164.5 L97.4 166 L99.9 178.4 L102.6 166 L104.4 164.5 Q112 163.4 118 160.5 Q123 158 126.2 154.7 L129 159.3 Q134 164 139.6 167.8 Q154 171 169 173.4 Q179 176 187 180 L200 191.4 L200 196 L0 196 Z" fill="url(#cl)"/>
<path d="M99.9 178.4 L99.7 196" stroke="#3852c0" stroke-width="1"/>
<path d="M11 178 Q16 186 20 196 L0 196 L0 189 Z" fill="#7c68e4" opacity=".7"/>
<path d="M178 176 Q181 185 182.6 196" stroke="#3a52c4" stroke-width="1" fill="none"/>
</svg>

</div>
<!-- Voice list -->
<div class="frame" style="left:974px;top:329px;width:207px;height:511px"></div>
<div class="flabel" style="left:978px;top:321px">Voice List</div>
<div class="sunk" style="left:983px;top:340px;width:190px;height:454px"></div>
<div class="a" style="left:985px;top:342px;width:186px;height:23px;background:#41a8e4"></div>
<div class="t" style="left:989px;top:346px;color:#fff">Voice 1</div>
<div class="btn" style="left:983px;top:802px;width:85px;height:30px"><span style="top:8px">New</span></div>
<div class="btn" style="left:1088px;top:802px;width:85px;height:30px"><span style="top:8px">Delete</span></div>

<!-- status bar -->
<div class="a" style="left:0;top:847px;width:1089px;height:22px;box-sizing:border-box;box-shadow:inset 1px 1px 0 #959190,inset -1px -1px 0 #fff"></div>
<div class="a" style="left:1092px;top:847px;width:93px;height:22px;box-sizing:border-box;box-shadow:inset 1px 1px 0 #959190,inset -1px -1px 0 #fff"></div>
<div class="t" style="left:1095px;top:851px">Frame: 118</div>
<svg class="a" style="left:36px;top:308px" width="20" height="28" viewBox="36 308 20 28"><path d="M40.8 313.6 L40.8 329.4 L44.4 326.2 L46.9 331.8 L49.2 330.8 L46.7 325.4 L51.4 325.2 Z" fill="#000" stroke="#fff" stroke-width="1" stroke-linejoin="miter"/></svg>
<svg class="a" style="left:1162px;top:846px" width="23" height="23" viewBox="0 0 23 23">
<g stroke-width="1.2"><path d="M22 2 L2 22 M22 7 L7 22 M22 12 L12 22 M22 17 L17 22" stroke="#fff"/><path d="M22 3.5 L3.5 22 M22 8.5 L8.5 22 M22 13.5 L13.5 22 M22 18.5 L18.5 22" stroke="#8a8684" stroke-width="1.8"/></g></svg>
</div>
</body>
</html>
